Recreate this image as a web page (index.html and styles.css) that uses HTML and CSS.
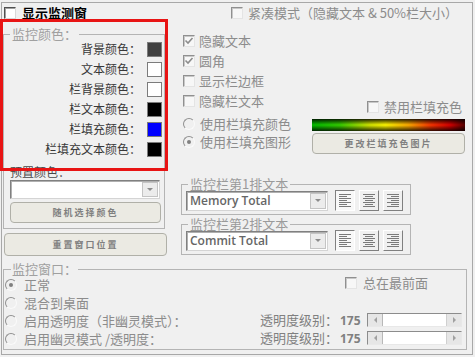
FILE: index.html
```html
<!DOCTYPE html>
<html lang="zh-CN">
<head>
  <meta charset="UTF-8">
  <title>监控窗设置</title>
  <link rel="stylesheet" href="styles.css">
</head>
<body>
  <div class="frame">
    <div class="top">
      <!-- Left column: colours -->
      <div class="col-left">
        <div class="check-row main-toggle">
          <span class="cb strong"></span>
          <span>显示监测窗</span>
        </div>

        <fieldset class="group colors">
          <legend>监控颜色：</legend>
          <div class="color-list">
            <div class="color-row"><span>背景颜色：</span><span class="swatch dark"></span></div>
            <div class="color-row"><span>文本颜色：</span><span class="swatch white"></span></div>
            <div class="color-row"><span>栏背景颜色：</span><span class="swatch white"></span></div>
            <div class="color-row"><span>栏文本颜色：</span><span class="swatch black"></span></div>
            <div class="color-row"><span>栏填充颜色：</span><span class="swatch blue"></span></div>
            <div class="color-row"><span>栏填充文本颜色：</span><span class="swatch black"></span></div>
          </div>
          <div class="preset-label">预置颜色：</div>
          <div class="combo preset"><span class="combo-text"></span><span class="combo-btn"><i></i></span></div>
          <div class="btn random">随机选择颜色</div>
        </fieldset>

        <div class="btn reset">重置窗口位置</div>
      </div>

      <!-- Right column: bar options -->
      <div class="col-right">
        <div class="check-row compact-row">
          <span class="cb"></span>
          <span>紧凑模式（隐藏文本 &amp; 50%栏大小）</span>
        </div>

        <div class="opts">
          <div class="opt-list">
            <div class="check-row opt"><span class="cb"><svg width="10" height="10" viewBox="0 0 10 10"><path d="M1.5 4.5l2.5 2.5 4.5-5" stroke="#8c8c8c" stroke-width="1.6" fill="none"/></svg></span><span>隐藏文本</span></div>
            <div class="check-row opt"><span class="cb"><svg width="10" height="10" viewBox="0 0 10 10"><path d="M1.5 4.5l2.5 2.5 4.5-5" stroke="#8c8c8c" stroke-width="1.6" fill="none"/></svg></span><span>圆角</span></div>
            <div class="check-row opt"><span class="cb"></span><span>显示栏边框</span></div>
            <div class="check-row opt"><span class="cb"></span><span>隐藏栏文本</span></div>
            <div class="radio-row first"><span class="radio"></span><span>使用栏填充颜色</span></div>
            <div class="radio-row"><span class="radio on"></span><span>使用栏填充图形</span></div>
          </div>

          <div class="fill-panel">
            <div class="check-row disable-row"><span class="cb"></span><span>禁用栏填充色</span></div>
            <div class="gradient"></div>
            <div class="btn change">更改栏填充色图片</div>
          </div>
        </div>

        <fieldset class="group bar-group">
          <legend>监控栏第1排文本</legend>
          <div class="bar-row">
            <div class="combo bar-combo"><span class="combo-text">Memory Total</span><span class="combo-btn"><i></i></span></div>
            <div class="align-btns">
              <span class="align-btn pressed"><svg width="12" height="13" viewBox="0 0 12 13"><path d="M0 .5h12M0 2.5h8M0 4.5h12M0 6.5h8M0 8.5h12M0 10.5h8M0 12.5h12" stroke="#7a7a7a"/></svg></span>
              <span class="align-btn"><svg width="12" height="13" viewBox="0 0 12 13"><path d="M0 .5h12M2 2.5h8M0 4.5h12M2 6.5h8M0 8.5h12M2 10.5h8M0 12.5h12" stroke="#7a7a7a"/></svg></span>
              <span class="align-btn"><svg width="12" height="13" viewBox="0 0 12 13"><path d="M0 .5h12M4 2.5h8M0 4.5h12M4 6.5h8M0 8.5h12M4 10.5h8M0 12.5h12" stroke="#7a7a7a"/></svg></span>
            </div>
          </div>
        </fieldset>

        <fieldset class="group bar-group">
          <legend>监控栏第2排文本</legend>
          <div class="bar-row">
            <div class="combo bar-combo"><span class="combo-text">Commit Total</span><span class="combo-btn"><i></i></span></div>
            <div class="align-btns">
              <span class="align-btn pressed"><svg width="12" height="13" viewBox="0 0 12 13"><path d="M0 .5h12M0 2.5h8M0 4.5h12M0 6.5h8M0 8.5h12M0 10.5h8M0 12.5h12" stroke="#7a7a7a"/></svg></span>
              <span class="align-btn"><svg width="12" height="13" viewBox="0 0 12 13"><path d="M0 .5h12M2 2.5h8M0 4.5h12M2 6.5h8M0 8.5h12M2 10.5h8M0 12.5h12" stroke="#7a7a7a"/></svg></span>
              <span class="align-btn"><svg width="12" height="13" viewBox="0 0 12 13"><path d="M0 .5h12M4 2.5h8M0 4.5h12M4 6.5h8M0 8.5h12M4 10.5h8M0 12.5h12" stroke="#7a7a7a"/></svg></span>
            </div>
          </div>
        </fieldset>
      </div>
    </div>

    <!-- Bottom: window mode -->
    <fieldset class="group window">
      <legend>监控窗口：</legend>
      <div class="window-body">
        <div class="radio-list">
          <div class="radio-row"><span class="radio on"></span><span>正常</span></div>
          <div class="radio-row"><span class="radio"></span><span>混合到桌面</span></div>
          <div class="radio-row"><span class="radio"></span><span>启用透明度（非幽灵模式）：</span></div>
          <div class="radio-row"><span class="radio"></span><span>启用幽灵模式 /透明度：</span></div>
        </div>
        <div class="window-right">
          <div class="check-row ontop-row"><span class="cb"></span><span>总在最前面</span></div>
          <div class="alpha-row first">
            <span class="alpha-label">透明度级别：</span><span class="alpha-val">175</span>
            <div class="slider"><span class="sl-btn left"><i></i></span><span class="sl-track"></span><span class="sl-btn right"><i></i></span></div>
          </div>
          <div class="alpha-row">
            <span class="alpha-label">透明度级别：</span><span class="alpha-val">175</span>
            <div class="slider"><span class="sl-btn left"><i></i></span><span class="sl-track"></span><span class="sl-btn right"><i></i></span></div>
          </div>
        </div>
      </div>
    </fieldset>
  </div>

  <!-- Highlight drawn over the colour section -->
  <div class="highlight"></div>
</body>
</html>
```

FILE: styles.css
```css
/* General */
* {
  box-sizing: border-box;
}

body {
  margin: 0;
  width: 475px;
  height: 357px;
  overflow: hidden;
  background-color: #f0f0f0;
  font-family: "Noto Sans CJK SC", sans-serif;
  font-size: 13px;
  color: #8c8c8c;
}

.frame {
  width: 472px;
  height: 353px;
  margin: 2px 0 0 1px;
  border: 1px solid #a8a8a8;
}

.top {
  display: flex;
  align-items: flex-start;
}

.col-left {
  width: 173px;
}

.col-right {
  flex: 1;
}

/* Checkboxes and radios */
.check-row,
.radio-row {
  display: flex;
  align-items: center;
  gap: 5px;
  white-space: nowrap;
  line-height: 14px;
}

.cb {
  width: 12px;
  height: 12px;
  flex: none;
  display: flex;
  align-items: center;
  justify-content: center;
  border: 1px solid;
  border-color: #909090 #e4e4e4 #e4e4e4 #909090;
  background-color: #f7f7f7;
  box-shadow: inset 1px 1px 0 #c8c8c8;
}

.cb.strong {
  border-color: #505050 #d8d8d8 #d8d8d8 #505050;
  background-color: #fff;
  box-shadow: inset 1px 1px 0 #a0a0a0;
}

.radio {
  width: 12px;
  height: 12px;
  flex: none;
  display: flex;
  align-items: center;
  justify-content: center;
  border-radius: 50%;
  border: 1px solid;
  border-color: #909090 #fafafa #fafafa #909090;
}

.radio.on::after {
  content: "";
  width: 4px;
  height: 4px;
  border-radius: 50%;
  background-color: #808080;
}

/* Group boxes */
.group {
  margin: 0;
  padding: 0;
  min-width: 0;
  border: 1px solid #b4b4b4;
}

.group legend {
  padding: 0 2px;
  line-height: 14px;
  color: #a0a0a0;
}

/* Buttons */
.btn {
  display: flex;
  align-items: center;
  justify-content: center;
  border: 1px solid #b0b0a8;
  border-radius: 4px;
  background-color: #ebeae3;
  color: #808080;
  font-size: 9px;
  font-weight: bold;
  letter-spacing: 2px;
}

/* Left column */
.main-toggle {
  height: 20px;
  padding-left: 2px;
  gap: 6px;
  color: #000;
  font-weight: bold;
}

.colors {
  width: 162px;
  margin: 4px 0 0 1px;
  padding: 0 2px 5px 6px;
}

.color-list {
  margin-top: -2px;
}

.color-row {
  height: 20px;
  display: flex;
  align-items: center;
  justify-content: flex-end;
  gap: 6px;
  font-size: 12px;
  line-height: 14px;
  color: #383838;
}

.swatch {
  width: 15px;
  height: 15px;
  border: 1px solid #7c7c7c;
}

.swatch.dark { background-color: #404040; }
.swatch.white { background-color: #fff; }
.swatch.black { background-color: #000; }
.swatch.blue { background-color: #0000ff; }

.preset-label {
  margin-top: 6px;
  font-size: 12px;
  line-height: 14px;
  color: #484848;
}

.combo {
  display: flex;
  align-items: stretch;
  border: 1px solid;
  border-color: #808080 #d4d4d4 #d4d4d4 #808080;
  background-color: #fff;
  box-shadow: inset 1px 1px 0 #b0b0b0;
}

.combo-text {
  flex: 1;
  padding: 0 3px;
  overflow: hidden;
}

.combo-btn {
  width: 16px;
  margin: 1px;
  display: flex;
  align-items: center;
  justify-content: center;
  border: 1px solid #c4c4c4;
  background-color: #ececec;
}

.combo-btn i {
  width: 0;
  height: 0;
  border-left: 3px solid transparent;
  border-right: 3px solid transparent;
  border-top: 3px solid #8c8c8c;
}

.preset {
  width: 150px;
  height: 19px;
  margin-top: 1px;
}

.random {
  width: 151px;
  height: 21px;
  margin-top: 3px;
}

.reset {
  width: 163px;
  height: 23px;
  margin: 4px 0 0 2px;
}

/* Right column */
.compact-row {
  height: 20px;
  padding-left: 56px;
}

.opts {
  display: flex;
  align-items: flex-start;
  margin-top: 8px;
}

.opt-list {
  padding-left: 8px;
}

.opt {
  height: 20px;
  gap: 4px;
}

.opt-list .radio-row {
  height: 18px;
}

.opt-list .radio-row.first {
  margin-top: 4px;
}

.fill-panel {
  width: 153px;
  margin: 67px 7px 0 auto;
}

.disable-row {
  height: 18px;
  justify-content: flex-end;
  padding-right: 3px;
}

.gradient {
  height: 12px;
  margin-top: 3px;
  background:
    linear-gradient(to bottom, rgba(0, 0, 0, 0.85), rgba(0, 0, 0, 0) 45%, rgba(0, 0, 0, 0) 55%, rgba(0, 0, 0, 0.8)),
    linear-gradient(to right, #00b000, #30c000 18%, #c8d800 38%, #f0e800 48%, #f0a000 63%, #e83000 78%, #c80000 90%, #500000);
}

.change {
  height: 21px;
  margin-top: 2px;
}

.bar-group {
  width: 230px;
  margin: 23px 0 0 6px;
  padding: 0 0 3px 4px;
}

.bar-group + .bar-group {
  margin-top: 2px;
}

.bar-group legend {
  margin-left: 2px;
  color: #9a9a9a;
}

.bar-row {
  height: 21px;
  margin-top: -1px;
  display: flex;
  align-items: center;
}

.bar-combo {
  width: 142px;
  height: 20px;
  font-family: "Open Sans", sans-serif;
  font-weight: 600;
  font-size: 12px;
  line-height: 17px;
  color: #666;
}

.align-btns {
  display: flex;
  gap: 4px;
  margin-left: 7px;
}

.align-btn {
  width: 20px;
  height: 21px;
  display: flex;
  align-items: center;
  justify-content: center;
  border: 1px solid;
  border-color: #fff #808080 #808080 #fff;
  background-color: #f0f0f0;
}

.align-btn.pressed {
  border-color: #808080 #fff #fff #808080;
  background-color: #f8f8f8;
}

/* Bottom group */
.window {
  width: 464px;
  margin: 6px 0 0 1px;
  padding: 0 0 1px 1px;
}

.window legend {
  margin-left: 6px;
  padding: 0 1px;
}

.window-body {
  display: flex;
}

.radio-list .radio-row {
  height: 18px;
  gap: 7px;
}

.window-right {
  width: 206px;
  margin-left: auto;
}

.ontop-row {
  height: 14px;
  padding-left: 85px;
  gap: 6px;
}

.alpha-row {
  height: 18px;
  display: flex;
  align-items: center;
  justify-content: flex-end;
  padding-right: 4px;
  white-space: nowrap;
}

.alpha-row.first {
  margin-top: 21px;
}

.alpha-label {
  color: #808080;
  line-height: 14px;
}

.alpha-val {
  width: 22px;
  margin-left: 2px;
  font-family: "Open Sans", sans-serif;
  font-weight: bold;
  font-size: 12px;
  color: #808080;
}

.slider {
  width: 95px;
  height: 14px;
  margin-left: 5px;
  display: flex;
  border: 1px solid;
  border-color: #8c8c8c #e8e8e8 #e8e8e8 #8c8c8c;
  background-color: #fff;
}

.sl-track {
  flex: 1;
}

.sl-btn {
  width: 15px;
  display: flex;
  align-items: center;
  justify-content: center;
  background-color: #e6e6e6;
  border-right: 1px solid #b8b8b8;
}

.sl-btn.right {
  border-right: none;
  border-left: 1px solid #d0d0d0;
}

.sl-btn i {
  width: 0;
  height: 0;
  border-top: 3px solid transparent;
  border-bottom: 3px solid transparent;
}

.sl-btn.left i {
  border-right: 3px solid #a0a0a0;
}

.sl-btn.right i {
  border-left: 3px solid #a0a0a0;
}

/* Red highlight box over the colour settings */
.highlight {
  position: absolute;
  left: 0;
  top: 19px;
  width: 168px;
  height: 152px;
  border: 3px solid #e81414;
}
```
